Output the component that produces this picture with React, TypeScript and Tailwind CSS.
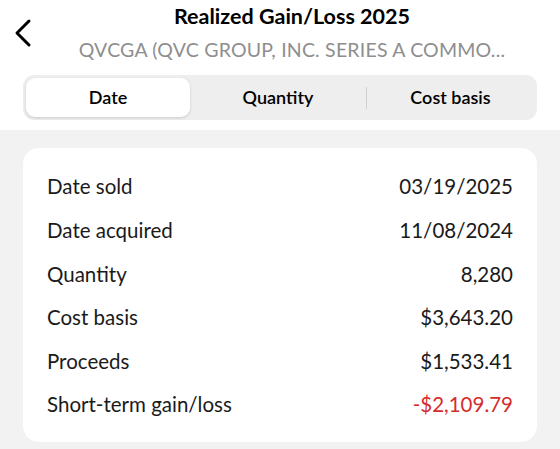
import React from 'react';

const rows = [
  { label: 'Date sold', value: '03/19/2025' },
  { label: 'Date acquired', value: '11/08/2024' },
  { label: 'Quantity', value: '8,280' },
  { label: 'Cost basis', value: '$3,643.20' },
  { label: 'Proceeds', value: '$1,533.41' },
  { label: 'Short-term gain/loss', value: '-$2,109.79', negative: true },
];

export default function App() {
  return (
    <div className="w-[560px] h-[449px] overflow-hidden bg-[#f2f2f2] font-['Lato',sans-serif] text-[#1a1a1a]">
      <div className="bg-white pb-[10px]">
        <div className="relative h-[72px]">
          <button className="absolute left-[8px] top-[14px] p-1 text-black">
            <svg width="22" height="30" viewBox="0 0 22 30" fill="none">
              <path d="M17 3 L5 15 L17 27" stroke="currentColor" strokeWidth="3" strokeLinecap="round" strokeLinejoin="round" />
            </svg>
          </button>
          <div className="flex flex-col items-center pl-[24px] pt-[2px]">
            <h1 className="text-[21.5px] leading-[28px] font-bold text-black">Realized Gain/Loss 2025</h1>
            <p className="mt-[8px] text-[19.5px] leading-[24px] text-[#8e8e8e] tracking-[0.2px]">QVCGA (QVC GROUP, INC. SERIES A COMMO...</p>
          </div>
        </div>
        <div className="mx-[23px] mt-[3px] h-[45px] rounded-[11px] bg-[#eeeeef] p-[3px] flex items-center">
          <div className="w-[164px] h-[39px] rounded-[9px] bg-white shadow-[0_1px_3px_rgba(0,0,0,0.15)] flex items-center justify-center text-[18px] font-semibold text-black">
            Date
          </div>
          <div className="w-[176px] flex items-center justify-center text-[18px] font-semibold text-black">
            Quantity
          </div>
          <div className="w-px h-[22px] bg-[#d0d0d2]" />
          <div className="flex-1 flex items-center justify-center text-[18px] font-semibold text-black">
            Cost basis
          </div>
        </div>
      </div>
      <div className="mx-[23px] mt-[18px] rounded-[16px] bg-white px-[24px] pt-[17px] pb-[15px]">
        {rows.map((r) => (
          <div key={r.label} className="h-[43.6px] flex items-center justify-between text-[20.5px]">
            <span>{r.label}</span>
            <span className={r.negative ? 'text-[#d62b2b]' : ''}>{r.value}</span>
          </div>
        ))}
      </div>
    </div>
  );
}
